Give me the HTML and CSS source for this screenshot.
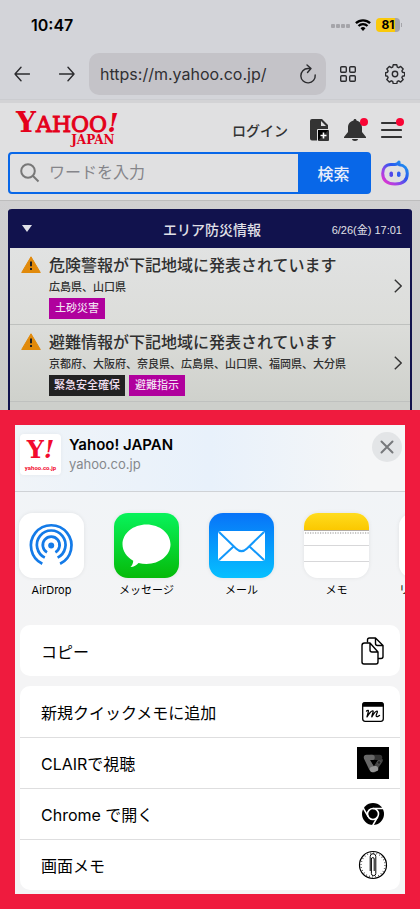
FILE: index.html
```html
<!DOCTYPE html>
<html lang="ja">
<head>
<meta charset="UTF-8" />
<meta name="viewport" content="width=device-width, initial-scale=1" />
<title>Yahoo! JAPAN</title>
<link rel="stylesheet" href="styles.css">
</head>
<body>
<div class="page">
  <div class="status-bar">
    <span class="time">10:47</span>
    <div class="status-icons">
      <svg width="20" height="6" viewBox="0 0 20 6" fill="#a5a5aa"><rect x="1" y="2" width="4" height="4" rx="1"/><rect x="6" y="2" width="4" height="4" rx="1"/><rect x="11" y="2" width="4" height="4" rx="1"/><rect x="16" y="2" width="4" height="4" rx="1"/></svg>
      <svg class="wifi" width="16" height="12" viewBox="0 0 16 12" fill="none" stroke="#000" stroke-width="2.3"><path d="M.9 4.2a10.200 10.200 0 0 1 14.200 0"/><path d="M3.500 7a6.400 6.400 0 0 1 9 0"/><path d="M8 12 5.500 9.300a3.600 3.600 0 0 1 5 0z" fill="#000" stroke="none"/></svg>
      <span class="battery">81</span>
    </div>
  </div>

  <nav class="toolbar">
    <button class="tool" aria-label="戻る"><svg width="16" height="16" viewBox="0 0 16 16"><path d="M15.500 8H1M7 1.200 1 8l6 6.800"/></svg></button>
    <button class="tool" aria-label="進む"><svg width="16" height="16" viewBox="0 0 16 16"><path d="M.5 8H15M9 1.200 15 8l-6 6.800"/></svg></button>
    <div class="url-box">
      <input type="text" aria-label="アドレス" value="https://m.yahoo.co.jp/">
      <button class="reload" aria-label="再読み込み"><svg width="18" height="20" viewBox="0 0 18 20"><path d="M16.200 11A7.200 7.200 0 1 1 9 4.500h2.500M8 1l4 3.500L8.500 8.500"/></svg></button>
    </div>
    <button class="tool" aria-label="タブ"><svg width="16" height="16" viewBox="0 0 16 16"><rect x=".7" y=".7" width="5.600" height="5.600" rx="1"/><rect x="9.700" y=".7" width="5.600" height="5.600" rx="1"/><rect x=".7" y="9.700" width="5.600" height="5.600" rx="1"/><rect x="9.700" y="9.700" width="5.600" height="5.600" rx="1"/></svg></button>
    <button class="tool" aria-label="設定"><svg width="20" height="20" viewBox="0 0 20 20"><circle cx="10" cy="10" r="2.700"/><path d="M8.200.8h3.600l.5 2.300 1.400.6 2-1.300 2.500 2.500-1.300 2 .6 1.400 2.200.5v2.900l-2.200.5-.6 1.400 1.300 2-2.500 2.500-2-1.300-1.400.6-.5 2.300H8.200l-.5-2.300-1.400-.6-2 1.300-2.500-2.500 1.300-2-.6-1.400-2-.5V8.800l2-.5.6-1.400-1.300-2 2.500-2.500 2 1.300 1.400-.6z"/></svg></button>
  </nav>

  <header class="site-header">
    <div class="brand-row">
      <a class="logo" href="#" aria-label="Yahoo! JAPAN">
        <span class="logo-main"><span class="logo-y">Y</span><span class="logo-rest">AHOO</span><span class="logo-bang">!</span></span>
        <span class="logo-sub">JAPAN</span>
      </a>
      <a class="login" href="#">ログイン</a>
      <button class="head-btn" aria-label="ページを追加"><svg width="20" height="22" viewBox="0 0 20 22"><path fill="#333" d="M2 0h10l6 6v4H9a1 1 0 0 0-1 1v10.500H2a2 2 0 0 1-2-2V2a2 2 0 0 1 2-2z"/><path fill="#e0e0e1" d="M11 2v5h5z"/><rect x="8" y="11" width="11" height="11" rx="1" fill="#333"/><path stroke="#e0e0e1" d="M7.500 22V10.500H19"/><path stroke="#fff" stroke-width="1.600" d="M13.500 13.500v6M10.500 16.500h6"/></svg></button>
      <button class="head-btn dot" aria-label="通知"><svg width="22" height="22" viewBox="0 0 22 22" fill="#333"><path d="M11 0c.9 0 1.500.6 1.500 1.500 3.500.8 5.500 3.500 5.500 7V13l4 5v1H0v-1l4-5V8.500c0-3.500 2-6.200 5.500-7C9.500.6 10.100 0 11 0zM8 20h6c0 1.200-1.300 2-3 2s-3-.8-3-2z"/></svg></button>
      <button class="head-btn dot" aria-label="メニュー"><svg width="22" height="22" viewBox="0 0 22 22" stroke="#333" stroke-width="2.200" stroke-linecap="round"><path d="M2 4h14M2 11h19M2 18h19"/></svg></button>
    </div>
    <div class="search-row">
      <form class="search">
        <svg width="20" height="20" viewBox="0 0 20 20" fill="none" stroke="#777" stroke-width="2"><circle cx="8" cy="8" r="6.800"/><path d="m13 13 5.500 5.500"/></svg>
        <input type="text" aria-label="検索ワード" placeholder="ワードを入力">
        <button type="button">検索</button>
      </form>
      <button class="assistant" aria-label="AIアシスタント"><svg width="28" height="26" viewBox="0 0 28 26">
        <defs><linearGradient id="ai" x1="0" y1="1" x2="1" y2="0"><stop offset="0" stop-color="#f52fc8"/><stop offset=".3" stop-color="#9a45e8"/><stop offset=".6" stop-color="#2c56ee"/><stop offset="1" stop-color="#18a5f0"/></linearGradient></defs>
        <path fill="none" stroke="url(#ai)" stroke-width="3" stroke-linejoin="round" d="M10 4.500h4c1.800 0 3-.8 4-2.500.1 1 0 2 .3 2.800 5 .3 8 3.700 8 8.700 0 7-4.300 10.500-12.300 10.500S1.700 20.500 1.700 13.500c0-5.500 3-9 8.300-9z"/>
        <rect x="8.500" y="11.500" width="3.500" height="5.500" rx="1.700" fill="#5148e9"/><rect x="16" y="11.500" width="3.500" height="5.500" rx="1.700" fill="#315df0"/></svg></button>
    </div>
  </header>

  <main class="content">
    <section class="alerts">
      <div class="alerts-head">
        <svg width="10" height="7" viewBox="0 0 10 7"><path fill="#e0e0e8" d="M0 0h10L5 7z"/></svg>
        <h1>エリア防災情報</h1>
        <time>6/26(金) 17:01</time>
      </div>
      <a class="alert" href="#">
        <svg class="warn" width="20" height="17" viewBox="0 0 20 17"><path fill="#e18a0b" d="M10 .8 19.300 16.500H.7z" stroke="#e18a0b" stroke-linejoin="round"/><path d="M10 5.500v4.800M10 12v2" stroke="#222" stroke-width="2"/></svg>
        <div class="alert-body">
          <h2>危険警報が下記地域に発表されています</h2>
          <p>広島県、山口県</p>
          <div class="tags"><span class="tag">土砂災害</span></div>
        </div>
        <svg class="chevron" width="8" height="14" viewBox="0 0 8 14"><path d="m.8.8 6.400 6.200L.8 13.200"/></svg>
      </a>
      <a class="alert" href="#">
        <svg class="warn" width="20" height="17" viewBox="0 0 20 17"><path fill="#e18a0b" d="M10 .8 19.300 16.500H.7z" stroke="#e18a0b" stroke-linejoin="round"/><path d="M10 5.500v4.800M10 12v2" stroke="#222" stroke-width="2"/></svg>
        <div class="alert-body">
          <h2>避難情報が下記地域に発表されています</h2>
          <p>京都府、大阪府、奈良県、広島県、山口県、福岡県、大分県</p>
          <div class="tags"><span class="tag black">緊急安全確保</span><span class="tag">避難指示</span></div>
        </div>
        <svg class="chevron" width="8" height="14" viewBox="0 0 8 14"><path d="m.8.8 6.400 6.200L.8 13.200"/></svg>
      </a>
    </section>
  </main>

  <div class="share-frame">
    <div class="share" role="dialog" aria-label="共有">
      <div class="share-head">
        <div class="site-icon">
          <span class="site-y">Y<i>!</i></span>
          <span class="site-url">yahoo.co.jp</span>
        </div>
        <div class="share-title">
          <strong>Yahoo! JAPAN</strong>
          <span>yahoo.co.jp</span>
        </div>
        <button class="close" aria-label="閉じる"><svg width="14" height="14" viewBox="0 0 14 14"><path d="m1.500 1.500 11 11m0-11-11 11"/></svg></button>
      </div>

      <div class="apps">
        <button class="app">
          <svg class="app-icon" viewBox="0 0 65 65"><rect width="65" height="65" fill="#fff"/><g fill="none" stroke="#147be8" stroke-width="2.700"><path d="M23.300 50.800a20.300 20.300 0 1 1 17.800 0"/><path d="M25.800 44.600a14.300 14.300 0 1 1 12.800 0"/><path d="M28 39.300a8.400 8.400 0 1 1 8.400 0"/></g><circle cx="32.200" cy="32.500" r="3" fill="#147be8"/></svg>
          <span>AirDrop</span>
        </button>
        <button class="app">
          <svg class="app-icon" viewBox="0 0 65 65"><defs><linearGradient id="msg" x2="0" y2="1"><stop stop-color="#08f35b"/><stop offset="1" stop-color="#06ba09"/></linearGradient></defs><rect width="65" height="65" fill="url(#msg)"/><path fill="#fff" d="M32.500 11.500c13.300 0 24 8.800 24 19.800s-10.700 19.700-24 19.700c-2.800 0-5.500-.4-8-1.100-1.800 2.300-4.500 3.800-8 4.100 1.600-1.500 2.700-3.700 2.700-6.300-6.400-3.600-10.700-9.600-10.700-16.400 0-11 10.700-19.800 24-19.800z"/></svg>
          <span>メッセージ</span>
        </button>
        <button class="app">
          <svg class="app-icon" viewBox="0 0 65 65"><defs><linearGradient id="mail" x2="0" y2="1"><stop stop-color="#0873f8"/><stop offset="1" stop-color="#06c0ff"/></linearGradient></defs><rect width="65" height="65" fill="url(#mail)"/><rect x="9" y="18" width="47" height="30" rx="3" fill="#fff"/><path fill="none" stroke="#1398fb" stroke-width="2" d="m10 19 17 16.500c3.500 3.400 7.500 3.400 11 0L55 19M10 47l14.500-13.500M55 47 40.500 33.500"/></svg>
          <span>メール</span>
        </button>
        <button class="app">
          <svg class="app-icon" viewBox="0 0 65 65"><defs><linearGradient id="memo" x2="0" y2="1"><stop stop-color="#ffdc1e"/><stop offset="1" stop-color="#fbc800"/></linearGradient></defs><rect width="65" height="65" fill="#fff"/><rect width="65" height="17" fill="url(#memo)"/><path stroke="#b4aca2" d="M0 17.500h65"/><path stroke="#b5b5b5" stroke-width="1.500" stroke-dasharray="1.200 1.300" d="M1 20h64"/><path stroke="#d7d7d9" d="M0 32.500h65M0 48.500h65"/></svg>
          <span>メモ</span>
        </button>
        <button class="app">
          <svg class="app-icon" viewBox="0 0 65 65"><rect width="65" height="65" fill="#fff"/></svg>
          <span>リマインダー</span>
        </button>
      </div>

      <div class="actions">
        <button class="action"><span>コピー</span><svg width="32" height="32" viewBox="0 0 32 32" fill="none" stroke="#000" stroke-width="1.400" stroke-linejoin="round"><path d="M10.500 7.500V5a2 2 0 0 1 2-2h6l7.500 7.500v11a2 2 0 0 1-2 2h-3M18.500 3v5.500a2 2 0 0 0 2 2H26"/><path d="M7.500 8h5.500l8 9v10a2 2 0 0 1-2 2H7a2 2 0 0 1-2-2V10.500A2.500 2.500 0 0 1 7.500 8zM13 8v7a2 2 0 0 0 2 2h6"/></svg></button>
      </div>
      <div class="actions">
        <button class="action"><span>新規クイックメモに追加</span><svg width="32" height="32" viewBox="0 0 32 32" fill="none" stroke="#000" stroke-width="1.300" stroke-linecap="round" stroke-linejoin="round"><rect x="5.700" y="6.700" width="20.600" height="18.600" rx="2.500"/><path fill="#000" d="M6 10V8.500A1.500 1.500 0 0 1 7.500 7h17A1.500 1.500 0 0 1 26 8.500V10z"/><path d="M9.500 15c1.500-1.200 2.200-.6 1.800.8L10 20.800c2.500-4 4.500-6.300 5.800-6 1.200.4-.8 3.600-1 6 2.300-3.800 4-6 5.200-5.700 1.300.5-1.200 3.500-.8 4.900.4 1 1.800.6 3.300-.5"/></svg></button>
        <button class="action"><span>CLAIRで視聴</span><svg width="32" height="32" viewBox="0 0 32 32"><rect width="32" height="32"/><g fill="none" stroke-linecap="round" stroke-linejoin="round" stroke-width="5.500"><path stroke="#444" d="M17 22.500 23 13.500"/><path stroke="#333" d="M14 10.500h8.500"/><path stroke="#686868" d="M15 10.500H9.500L14.500 21"/><path stroke="#969696" d="m15.500 22.500 3-.8"/></g><path d="M13 13h8l-4 6z"/><circle cx="22" cy="15.500" r="1.800" fill="#222" stroke="#555"/></svg></button>
        <button class="action"><span>Chrome で開く</span><svg width="32" height="32" viewBox="0 0 32 32"><circle cx="16" cy="16" r="11"/><circle cx="16" cy="16" r="5.500" fill="none" stroke="#fff" stroke-width="1.600"/><path fill="none" stroke="#fff" stroke-width="1.600" d="M16 10.500h11M11.200 18.700 5.700 9.200M20.800 18.700 15.300 28.200"/></svg></button>
        <button class="action"><span>画面メモ</span><svg width="32" height="32" viewBox="0 0 32 32" fill="none" stroke="#000"><circle cx="16" cy="16" r="13.500" stroke-width="1.200"/><circle cx="16" cy="16" r="12" stroke="#444" stroke-width="1.500" stroke-dasharray=".8 2.340"/><path stroke-width="1" d="M13.200 22V7.500a2.800 2.800 0 0 1 5.600 0V24.500a2.200 2.200 0 0 1-4.400 0V10a1.400 1.400 0 0 1 2.800 0v12"/></svg></button>
      </div>
    </div>
  </div>
</div>
</body>
</html>
```

FILE: styles.css
```css
:root {
  --ui: Inter, "Noto Sans CJK JP", sans-serif;
  --jp: "Liberation Sans", "Noto Sans CJK JP", sans-serif;
  --navy: #11124d;
  --blue: #0867e8;
  --red: #ef1b3e;
  --yahoo: #e4001b;
}

* {
  box-sizing: border-box;
}
body {
  margin: 0;
  background: var(--red);
  font-family: var(--ui);
}
button {
  margin: 0;
  padding: 0;
  border: none;
  background: none;
  color: inherit;
  font-family: inherit;
  cursor: pointer;
}
input {
  min-width: 0;
  padding: 0;
  border: none;
  background: none;
  outline: none;
}
a {
  color: inherit;
  text-decoration: none;
}
svg {
  display: block;
  flex-shrink: 0;
}
h1, h2, p {
  margin: 0;
}
.page {
  min-height: 100vh;
  display: flex;
  flex-direction: column;
  background: #d3d4d9;
}

/* status bar */
.status-bar {
  display: flex;
  justify-content: space-between;
  align-items: center;
  height: 50px;
  padding: 0 18px 0 31px;
}
.time {
  font-size: 16px;
  font-weight: 600;
}
.status-icons {
  display: flex;
  align-items: center;
  gap: 5px;
}
.battery {
  position: relative;
  width: 24px;
  height: 14px;
  margin-right: 2px;
  border-radius: 4px;
  background: linear-gradient(90deg, #fac90b 81%, #a5a5aa 81%);
  font-size: 12px;
  font-weight: 700;
  line-height: 14px;
  text-align: center;
}
.battery::after {
  content: "";
  position: absolute;
  top: 5px;
  right: -2px;
  width: 1px;
  height: 4px;
  background: #a5a5aa;
}

/* browser toolbar */
.toolbar {
  display: flex;
  align-items: center;
  height: 50px;
  padding: 0 15px 2px 14px;
  border-bottom: 1px solid #cbccd0;
}
.tool svg,
.reload svg {
  fill: none;
  stroke: #2b2b2e;
  stroke-width: 1.4;
  stroke-linecap: round;
  stroke-linejoin: round;
}
.tool + .tool {
  margin-left: 29px;
}
.url-box {
  flex: 1;
  display: flex;
  align-items: center;
  min-width: 0;
  height: 42px;
  margin: 0 14px;
  padding: 0 9px 0 11px;
  border-radius: 10px;
  background: #c4c3c8;
}
.url-box input {
  flex: 1;
  color: #303033;
  font-family: var(--ui);
  font-size: 16px;
}

/* site header */
.site-header {
  padding: 4px 8px 6px;
  border-top: 3px solid #d3d3d5;
  border-bottom: 1px solid #bdbdbd;
  background: #e0e0e1;
}
.brand-row {
  display: flex;
  align-items: center;
  gap: 14px;
  height: 45px;
  padding: 0 10px 0 8px;
}
.logo {
  display: flex;
  flex-direction: column;
  margin-right: auto;
  color: var(--yahoo);
  font-family: "DejaVu Serif", serif;
}
.logo-main {
  display: flex;
  align-items: baseline;
  line-height: 18px;
}
.logo-y {
  font-size: 28px;
  font-weight: 700;
}
.logo-rest {
  font-size: 22px;
  -webkit-text-stroke: 1px var(--yahoo);
}
.logo-bang {
  font-size: 26px;
  font-style: italic;
  font-weight: 700;
}
.logo-sub {
  align-self: flex-end;
  padding-right: 4px;
  font-size: 12px;
  font-weight: 700;
  line-height: 12px;
}
.login {
  margin-right: 8px;
  color: #333;
  font-family: var(--jp);
  font-size: 14px;
  font-weight: 500;
}
.head-btn {
  position: relative;
}
.dot::after {
  content: "";
  position: absolute;
  top: -1px;
  right: -2px;
  width: 8px;
  height: 8px;
  border-radius: 50%;
  background: #f90534;
}
.search-row {
  display: flex;
  align-items: center;
  gap: 10px;
  padding-right: 3px;
}
.search {
  flex: 1;
  display: flex;
  align-items: center;
  min-width: 0;
  height: 42px;
  padding-left: 10px;
  border: 2px solid var(--blue);
  border-radius: 4px;
}
.search input {
  flex: 1;
  margin-left: 9px;
  font-family: var(--jp);
  font-size: 16px;
}
.search input::placeholder {
  color: #85858a;
}
.search button {
  align-self: stretch;
  width: 71px;
  background: var(--blue);
  color: #e8eefa;
  font-family: var(--jp);
  font-size: 16px;
  font-weight: 500;
}

/* disaster information */
.content {
  padding: 8px 8px 0;
  background: linear-gradient(#d0d0d1, #c8c9c7);
}
.alerts {
  padding: 0 2px 8px;
  border-radius: 4px 4px 0 0;
  background: linear-gradient(90deg, var(--navy) 2px, #cdcfcb 2px calc(100% - 2px), var(--navy) calc(100% - 2px));
  font-family: var(--jp);
}
.alerts-head {
  display: grid;
  grid-template-columns: 1fr auto 1fr;
  align-items: center;
  height: 39px;
  margin: 0 -2px;
  padding: 0 10px 0 14px;
  border-radius: 4px 4px 0 0;
  background: var(--navy);
  color: #e0e0e8;
}
.alerts-head h1 {
  font-size: 14px;
  font-weight: 500;
}
.alerts-head time {
  font-size: 11px;
  text-align: right;
}
.alert {
  display: flex;
  align-items: center;
  gap: 8px;
  height: 77px;
  padding: 0 8px 0 11px;
  border-bottom: 1px solid #bfc1bf;
  background: linear-gradient(#e1e2e2, #dcddda);
  color: #303030;
}
.alert + .alert {
  background: linear-gradient(#dcddda, #cfd1cc);
}
.warn {
  align-self: flex-start;
  margin-top: 8px;
}
.alert-body {
  flex: 1;
}
.alert h2 {
  font-size: 16px;
  font-weight: 500;
  line-height: 24px;
}
.alert p {
  font-size: 11px;
  font-weight: 500;
  line-height: 18px;
}
.tags {
  display: flex;
  gap: 4px;
  margin-top: 2px;
}
.tag {
  padding: 0 6px;
  background: #b0009d;
  color: #f0dff0;
  font-size: 11px;
  font-weight: 500;
  line-height: 21px;
}
.tag.black {
  padding: 0 5px;
  background: #222;
}
.chevron {
  fill: none;
  stroke: #333;
  stroke-width: 1.4;
}

/* share sheet */
.share-frame {
  flex: 1;
  padding: 15px;
  background: var(--red);
}
.share {
  overflow: hidden;
  padding-bottom: 4px;
  background: #f4f4f5;
}
.share-head {
  display: flex;
  align-items: flex-start;
  gap: 8px;
  height: 67px;
  padding: 9px 3px 0 5px;
  border-bottom: 1px solid #cfd2d6;
  background: linear-gradient(90deg, #f0f4f8, #e8f1fb 50%, #f5f6f7 90%);
}
.site-icon {
  display: flex;
  flex-direction: column;
  align-items: center;
  justify-content: center;
  width: 41px;
  height: 41px;
  border-radius: 4px;
  background: #fff;
  color: #f20a2e;
  box-shadow: 0 0 4px rgba(0,0,0,0.05);
}
.site-y {
  font: 700 24px/26px "DejaVu Serif", serif;
}
.site-url {
  font: 700 6px/9px Roboto, sans-serif;
}
.share-title {
  flex: 1;
  display: flex;
  flex-direction: column;
  padding-top: 1px;
}
.share-title strong {
  font-size: 15px;
  font-weight: 600;
  line-height: 20px;
}
.share-title span {
  color: #85888c;
  font-size: 13px;
  line-height: 18px;
}
.close {
  display: flex;
  align-items: center;
  justify-content: center;
  width: 30px;
  height: 30px;
  margin-top: -2px;
  border-radius: 50%;
  background: #e3e5e7;
}
.close svg {
  fill: none;
  stroke: #77797c;
  stroke-width: 2;
  stroke-linecap: round;
}
.apps {
  display: flex;
  gap: 30px;
  padding: 21px 0 23px 4px;
  overflow: hidden;
  background: linear-gradient(#f1f4f7, #f4f4f5);
}
.app {
  flex: none;
  width: 65px;
  font-size: 11px;
  line-height: 24px;
  white-space: nowrap;
}
.app-icon {
  width: 65px;
  height: 65px;
  border-radius: 14px;
  box-shadow: 0 0 4px rgba(0,0,0,0.08);
}
.actions {
  margin: 0 5px;
  border-radius: 10px;
  background: #fff;
  overflow: hidden;
}
.actions + .actions {
  margin-top: 10px;
}
.action {
  display: flex;
  align-items: center;
  justify-content: space-between;
  width: 100%;
  height: 51px;
  padding: 0 11px 0 21px;
  font-size: 16px;
}
.action + .action {
  border-top: 1px solid #dededf;
}
```
